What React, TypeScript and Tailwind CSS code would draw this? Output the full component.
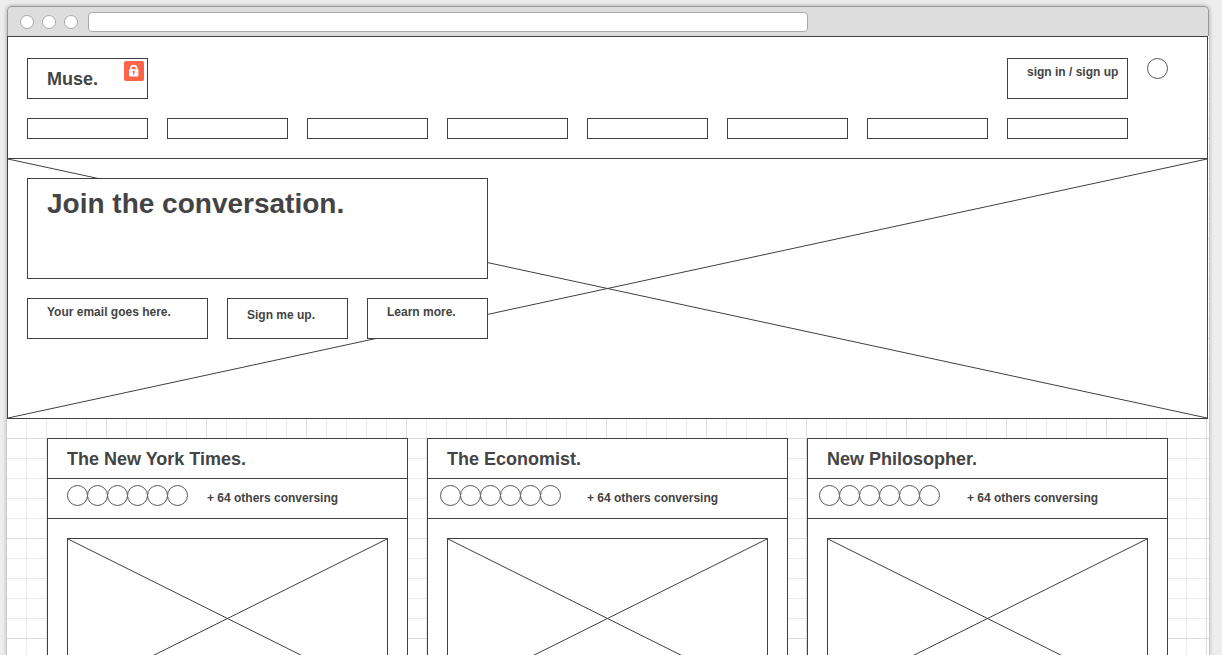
import React from "react";

type Publication = { name: string; inset: string };

const navItems = ["Section 1", "Section 2", "Section 3", "Section 4", "Section 5", "Section 6", "Section 7", "Section 8"];

const publications: Publication[] = [
  { name: "The New York Times.", inset: "pl-[19px]" },
  { name: "The Economist.", inset: "pl-3" },
  { name: "New Philosopher.", inset: "pl-[11px]" },
];

function Cross() {
  return (
    <svg className="absolute inset-0 h-full w-full text-[#404040]" viewBox="0 0 100 100" preserveAspectRatio="none" aria-hidden="true">
      <path d="M0 0 L100 100 M0 100 L100 0" stroke="currentColor" strokeWidth="1" fill="none" vectorEffect="non-scaling-stroke" />
    </svg>
  );
}

function Circle() {
  return (
    <svg className="-mr-px block size-[21px] shrink-0" viewBox="0 0 21 21" aria-hidden="true">
      <circle cx="10.5" cy="10.5" r="10" fill="#fff" stroke="#555" strokeWidth="1" />
    </svg>
  );
}

function LockBadge() {
  return (
    <span className="absolute right-[3px] top-0.5 flex size-5 items-center justify-center rounded-xs bg-[#ff6347]">
      <svg className="size-5" viewBox="0 0 20 20" aria-hidden="true">
        <path d="M6.8 8.6 V7.6 a2.9 2.9 0 0 1 5.8 0 V8.6" fill="none" stroke="#fff" strokeWidth="1.7" />
        <rect x="5" y="8.2" width="9.4" height="7.2" rx="0.8" fill="#fff" />
        <path d="M8.7 9.9 h2 v1.8 h-0.4 v2.1 h-1.2 v-2.1 h-0.4 z" fill="#ff6347" />
      </svg>
    </span>
  );
}

function BrowserBar() {
  return (
    <div className="flex h-[30px] items-center rounded-t-[5px] border border-b-0 border-[#999] bg-[#ddd] pt-px">
      <div className="mr-2.5 ml-3 flex gap-2">
        {[0, 1, 2].map((dot) => (
          <span key={dot} className="size-3.5 rounded-full border border-[#aaa] bg-white" />
        ))}
      </div>
      <input aria-label="Address" className="h-5 w-3/5 rounded-sm border border-[#aaa] bg-white px-2 text-xs outline-none" />
    </div>
  );
}

function Header() {
  return (
    <header className="mr-px border border-b-0 border-[#404040] bg-white pt-[21px] pr-[39px] pb-[19px] pl-[19px]">
      <div className="flex items-start gap-[19px]">
        <a href="#home" className="relative flex h-[41px] w-[121px] items-center border border-[#404040] pl-[19px] text-lg leading-6 font-bold">
          Muse.
          <LockBadge />
        </a>
        <a href="#account" className="ml-auto h-[41px] w-[121px] border border-[#404040] pt-[5px] pl-[19px] text-xs leading-4 font-bold whitespace-nowrap">
          sign in / sign up
        </a>
        <span className="size-[21px]">
          <Circle />
        </span>
      </div>
      <nav className="mt-[19px] mr-10 flex gap-[19px]">
        {navItems.map((item) => (
          <a key={item} href="#section" aria-label={item} className="h-[21px] flex-1 border border-[#404040]" />
        ))}
      </nav>
    </header>
  );
}

function Hero() {
  return (
    <section className="relative mr-px border border-[#404040] bg-white pt-[19px] pb-[79px] pl-[19px]">
      <Cross />
      <div className="relative flex w-[461px] max-w-full flex-col gap-[19px]">
        <div className="h-[101px] border border-[#404040] bg-white pt-[9px] pl-[19px]">
          <h1 className="text-[28px] leading-8 font-bold">Join the conversation.</h1>
        </div>
        <form className="flex gap-[19px]" onSubmit={(event) => event.preventDefault()}>
          <input
            type="email"
            aria-label="Email"
            placeholder="Your email goes here."
            className="h-[41px] min-w-0 flex-1 border border-[#404040] bg-white pt-[5px] pb-[18px] pl-[19px] text-xs leading-4 font-bold outline-none placeholder:text-[#444]"
          />
          <button type="submit" className="flex h-[41px] w-[121px] items-start border border-[#404040] bg-white pt-2 pl-[19px] text-xs leading-4 font-bold">
            Sign me up.
          </button>
          <button type="button" className="flex h-[41px] w-[121px] items-start border border-[#404040] bg-white pt-[5px] pl-[19px] text-xs leading-4 font-bold">
            Learn more.
          </button>
        </form>
      </div>
    </section>
  );
}

function Card({ name, inset }: Publication) {
  return (
    <article className="min-w-0 flex-1 border border-[#404040] bg-white">
      <h2 className="flex h-10 items-center border-b border-[#404040] pl-[19px] text-lg leading-6 font-bold">{name}</h2>
      <div className="flex h-10 items-start border-b border-[#404040]">
        <div className={`flex w-[159px] shrink-0 pt-1.5 ${inset}`}>
          {[0, 1, 2, 3, 4, 5].map((person) => (
            <Circle key={person} />
          ))}
        </div>
        <p className="pt-[11px] text-xs leading-4 font-bold whitespace-nowrap">+ 64 others conversing</p>
      </div>
      <div className="p-[19px]">
        <div className="relative h-[161px] border border-[#404040]">
          <Cross />
        </div>
      </div>
    </article>
  );
}

export default function App() {
  return (
    <div className="min-h-screen bg-[#ededed] pt-1.5 pr-[13px] pl-[7px] font-['Liberation_Sans',Arial,sans-serif] text-[#444]">
      <div className="rounded-t-[5px] shadow-[0_0_4px_rgba(0,0,0,0.35)]">
        <BrowserBar />
        <div className="bg-white bg-[linear-gradient(to_left,#ddd_1px,transparent_1px),linear-gradient(to_top,#ddd_1px,transparent_1px),linear-gradient(to_left,#ebebeb_1px,transparent_1px),linear-gradient(to_top,#ebebeb_1px,transparent_1px)] bg-[size:100px_100px,100px_100px,20px_20px,20px_20px] bg-[position:0_3px]">
          <Header />
          <Hero />
          <main className="mt-[19px] mr-[41px] ml-10 flex gap-[19px]">
            {publications.map((publication) => (
              <Card key={publication.name} {...publication} />
            ))}
          </main>
        </div>
      </div>
    </div>
  );
}
